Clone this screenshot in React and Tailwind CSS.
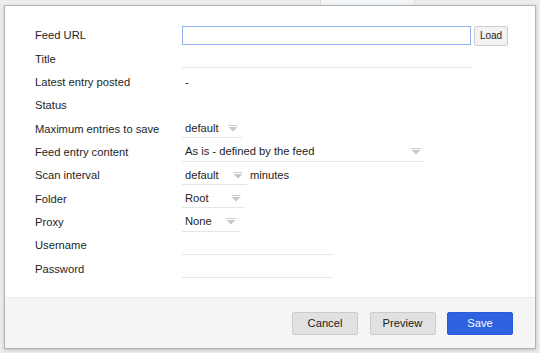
import React from "react";

function Arrow() {
  return (
    <svg width="10" height="7" viewBox="0 0 10 7" className="shrink-0">
      <rect x="0.5" y="0" width="9" height="1" fill="#c8c8c8" />
      <path d="M0.5 2 L9.5 2 L5 6.5 Z" fill="#c8c8c8" />
    </svg>
  );
}

function Select({ value, width }) {
  return (
    <div
      className="h-[19px] flex items-center justify-between border-b border-[#e6e6e6] pl-[3px] pr-[4px]"
      style={{ width }}
    >
      <span>{value}</span>
      <Arrow />
    </div>
  );
}

function Row({ label, children }) {
  return (
    <div className="h-[23.33px] flex items-center">
      <div className="w-[147px] shrink-0">{label}</div>
      <div className="flex items-center">{children}</div>
    </div>
  );
}

export default function App() {
  return (
    <div
      className="w-[540px] h-[353px] bg-[#ececec] relative overflow-hidden text-[11.2px] text-[#1e1e1e]"
      style={{ fontFamily: '"Liberation Sans", Arial, sans-serif' }}
    >
      <div className="absolute left-[320px] top-0 w-[95px] h-[5px] bg-[#f2f5f8] border-x border-[#dcdcdc]" />
      <div className="absolute left-[4px] top-[5px] w-[532px] h-[344px] bg-white border border-[#b4b4b4] shadow-[0_1px_3px_rgba(0,0,0,0.2)] flex flex-col">
        <div className="flex-1 pl-[30px] pt-[18px]">
          <Row label="Feed URL">
            <div className="w-[289px] h-[19px] border border-[#8fb2f2] bg-white" />
            <button className="ml-[3px] w-[34px] h-[20px] bg-[#f2f2f2] border border-[#cdcdcd] rounded-[2px] text-[10px] text-[#222] flex items-center justify-center">
              Load
            </button>
          </Row>
          <Row label="Title">
            <div className="w-[289px] h-[19px] border-b border-[#e6e6e6]" />
          </Row>
          <Row label="Latest entry posted">
            <span className="pl-[3px]">-</span>
          </Row>
          <Row label="Status">
            <span />
          </Row>
          <Row label="Maximum entries to save">
            <Select value="default" width={60} />
          </Row>
          <Row label="Feed entry content">
            <Select value="As is - defined by the feed" width={243} />
          </Row>
          <Row label="Scan interval">
            <Select value="default" width={65} />
            <span className="ml-[3px]">minutes</span>
          </Row>
          <Row label="Folder">
            <Select value="Root" width={63} />
          </Row>
          <Row label="Proxy">
            <Select value="None" width={58} />
          </Row>
          <Row label="Username">
            <div className="w-[151px] h-[19px] border-b border-[#e6e6e6]" />
          </Row>
          <Row label="Password">
            <div className="w-[151px] h-[19px] border-b border-[#e6e6e6]" />
          </Row>
        </div>
        <div className="h-[51px] bg-[#f5f5f5] border-t border-[#ececec] flex items-center justify-end pr-[22px] gap-[11.5px]">
          <button className="w-[66px] h-[23px] bg-[#e1e1e1] border border-[#cccccc] rounded-[2px] text-[#222]">
            Cancel
          </button>
          <button className="w-[66px] h-[23px] bg-[#e1e1e1] border border-[#cccccc] rounded-[2px] text-[#222]">
            Preview
          </button>
          <button className="w-[66px] h-[23px] bg-[#2e62df] border border-[#2a5bd6] rounded-[2px] text-white">
            Save
          </button>
        </div>
      </div>
    </div>
  );
}
